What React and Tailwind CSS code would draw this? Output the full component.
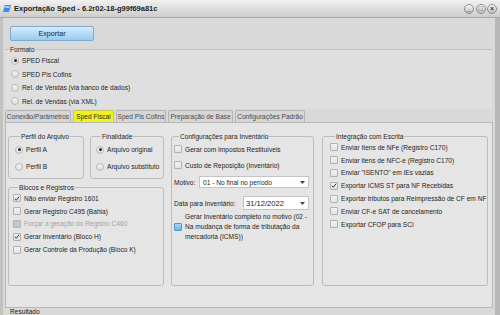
import React from 'react';

const Check = ({ checked, disabled, focus }) => (
  <span
    className={`w-[8px] h-[8px] shrink-0 rounded-[1px] border flex items-center justify-center ${
      focus
        ? 'border-[#4f97cf] bg-gradient-to-b from-[#a6d6f5] to-[#72b6e6]'
        : disabled
        ? 'border-[#b3b3b3] bg-[#c6c6c6]'
        : 'border-[#b0b0b0] bg-gradient-to-b from-[#f3f3f3] to-[#e3e3e3]'
    }`}
  >
    {checked && (
      <svg width="7" height="7" viewBox="0 0 8 8">
        <path d="M1.2 4.3 L3.1 6.3 L6.8 1.6" fill="none" stroke="#2a2a2a" strokeWidth="1.3" />
      </svg>
    )}
  </span>
);

const Radio = ({ checked }) => (
  <span className="w-[8px] h-[8px] shrink-0 rounded-full border border-[#b8b8b8] bg-gradient-to-b from-[#f4f4f4] to-[#dedede] flex items-center justify-center">
    {checked && <span className="w-[3px] h-[3px] rounded-full bg-[#2a2a2a]" />}
  </span>
);

const CheckRow = ({ label, checked, disabled, h = 'h-[12.8px]' }) => (
  <div className={`flex items-center gap-[3px] whitespace-nowrap ${h}`}>
    <Check checked={checked} disabled={disabled} />
    <span className={disabled ? 'text-[#a3a3a3]' : ''}>{label}</span>
  </div>
);

const RadioRow = ({ label, checked, h }) => (
  <div className={`flex items-center gap-[3px] whitespace-nowrap ${h}`}>
    <Radio checked={checked} />
    <span>{label}</span>
  </div>
);

const Group = ({ title, className, children }) => (
  <fieldset className={`border border-[#bcbcbc] rounded-[3px] ${className}`}>
    <legend className="ml-[5px] px-[1px] leading-[9px]">{title}</legend>
    {children}
  </fieldset>
);

const Arrow = () => (
  <svg width="5" height="3" viewBox="0 0 5 3">
    <path d="M0 0 H5 L2.5 3 Z" fill="#444" />
  </svg>
);

const tabs = [
  ['Conexão/Parâmetros', 'w-[66px]'],
  ['Sped Fiscal', 'w-[41px]'],
  ['Sped Pis Cofins', 'w-[50px]'],
  ['Preparação de Base', 'w-[65px]'],
  ['Configurações Padrão', 'w-[70px]'],
];

export default function App() {
  return (
    <div className="w-[500px] h-[315px] overflow-hidden flex flex-col bg-[#d9d9d9] text-[6.6px] leading-[9px] text-[#1e1e1e] font-['Liberation_Sans',Arial,sans-serif]">
      {/* title bar */}
      <div className="h-[18px] shrink-0 flex items-center bg-gradient-to-b from-[#f1f1f1] to-[#cdcdcd] border-b border-[#a8a8a8]">
        <svg className="ml-[3px]" width="8" height="7" viewBox="0 0 8 7">
          <path d="M2 0 H8 L6 7 H0 Z" fill="#3a8fe0" />
          <path d="M2.6 1 H7 L6.2 3 H1.9 Z" fill="#9fd0ff" />
        </svg>
        <span className="ml-[3px] font-bold text-[7.5px] text-[#1e1e1e]">Exportação Sped - 6.2r02-18-g99f69a81c</span>
        <div className="ml-auto mr-[3px] flex gap-[1.5px]">
          {['_', '□', '×'].map((g, i) => (
            <span
              key={i}
              className="w-[10px] h-[10px] rounded-full border border-[#8e8e8e] bg-gradient-to-b from-[#fafafa] to-[#bdbdbd] flex items-center justify-center text-[7px] leading-[7px] font-bold text-[#333]"
            >
              {g}
            </span>
          ))}
        </div>
      </div>

      {/* body */}
      <div className="flex-1 flex flex-col border-l-[3px] border-l-[#c2c2c2] border-r-[5px] border-r-[#b8b8b8] pl-[2px]">
        <button className="ml-[5px] mt-[8px] w-[84px] h-[15px] rounded-[2px] border border-[#7eaacd] bg-gradient-to-b from-[#d7ecfb] to-[#98caef] text-[7.2px] text-[#1e1e1e]">
          Exportar
        </button>

        <fieldset className="mt-[4px] w-[487px] border-t border-[#c2c2c2] bg-[#dfdfdf] pb-[1px]">
          <legend className="ml-[4px] px-[1px] leading-[9px]">Formato</legend>
          <div className="pl-[6px]">
            <RadioRow label="SPED Fiscal" checked h="h-[13.5px]" />
            <RadioRow label="SPED Pis Cofins" h="h-[13.5px]" />
            <RadioRow label="Rel. de Vendas (via banco de dados)" h="h-[13.5px]" />
            <RadioRow label="Rel. de Vendas (via XML)" h="h-[13.5px]" />
          </div>
        </fieldset>

        {/* tabs */}
        <div className="mt-[1px] flex gap-[2px] h-[12px]">
          {tabs.map(([t, w], i) => (
            <div
              key={t}
              className={`${w} h-[12px] flex items-center justify-center whitespace-nowrap border border-b-0 rounded-t-[2px] ${
                i === 1 ? 'bg-[#f4f21c] border-[#c9c55a] text-[#1e1e1e]' : 'bg-[#d6d6d6] border-[#b4b4b4] text-[#4a4a4a]'
              }`}
            >
              {t}
            </div>
          ))}
        </div>

        {/* tab panel */}
        <div className="w-[488px] h-[186px] shrink-0 bg-[#e5e5e5] border border-[#b8b8b8] pl-[2px] pt-[9px] flex gap-[7px]">
          <div className="w-[156px] flex flex-col">
            <div className="flex gap-[6px]">
              <Group title="Perfil do Arquivo" className="w-[76px] h-[47px] pl-[6px]">
                <RadioRow label="Perfil A" checked h="h-[17px]" />
                <RadioRow label="Perfil B" h="h-[17px]" />
              </Group>
              <Group title="Finalidade" className="w-[74px] h-[47px] pl-[5px]">
                <RadioRow label="Arquivo original" checked h="h-[17px]" />
                <RadioRow label="Arquivo substituto" h="h-[17px]" />
              </Group>
            </div>
            <Group title="Blocos e Registros" className="mt-[4px] w-[156px] h-[103px] pl-[4px]">
              <CheckRow label="Não enviar Registro 1601" checked />
              <CheckRow label="Gerar Registro C495 (Bahia)" />
              <CheckRow label="Forçar a geração do Registro C460" disabled />
              <CheckRow label="Gerar Inventário (Bloco H)" checked />
              <CheckRow label="Gerar Controle da Produção (Bloco K)" />
            </Group>
          </div>

          <Group title="Configurações para Inventário" className="w-[143px] h-[154px] pl-[2px] pr-[4px]">
            <CheckRow label="Gerar com Impostos Restituíveis" h="h-[16px]" />
            <CheckRow label="Custo de Reposição (Inventário)" h="h-[16px]" />
            <div className="mt-[3px] h-[12px] flex items-center">
              <span className="w-[25px]">Motivo:</span>
              <div className="flex-1 h-[12px] bg-white border border-[#c4c4c4] flex items-center pl-[3px] pr-[3px]">
                <span className="flex-1">01 - No final no período</span>
                <Arrow />
              </div>
            </div>
            <div className="mt-[8px] h-[14px] flex items-center">
              <span className="w-[69px]">Data para Inventário:</span>
              <div className="flex-1 h-[14px] bg-white border border-[#c4c4c4] flex items-center pl-[2px] pr-[3px]">
                <span className="flex-1 text-[7.6px]">31/12/2022</span>
                <Arrow />
              </div>
            </div>
            <div className="mt-[2px] flex items-center gap-[3px]">
              <Check focus />
              <span className="leading-[10px]">
                Gerar Inventário completo no motivo (02 -<br />
                Na mudança de forma de tributação da<br />
                mercadoria (ICMS))
              </span>
            </div>
          </Group>

          <Group title="Integração com Escrita" className="ml-[1px] w-[166px] h-[154px] pl-[7px]">
            <CheckRow label="Enviar Itens de NFe (Registro C170)" />
            <CheckRow label="Enviar itens de NFC-e (Registro C170)" />
            <CheckRow label={'Enviar "ISENTO" em IEs vazias'} />
            <CheckRow label="Exportar ICMS ST para NF Recebidas" checked />
            <CheckRow label="Exportar tributos para Reimpressão de CF em NF" />
            <CheckRow label="Enviar CF-e SAT de cancelamento" />
            <CheckRow label="Exportar CFOP para SCI" />
          </Group>
        </div>

        <div className="flex-1 overflow-hidden pl-[5px] leading-[6px] pt-[1px]">
          <span>Resultado</span>
        </div>
      </div>
    </div>
  );
}
